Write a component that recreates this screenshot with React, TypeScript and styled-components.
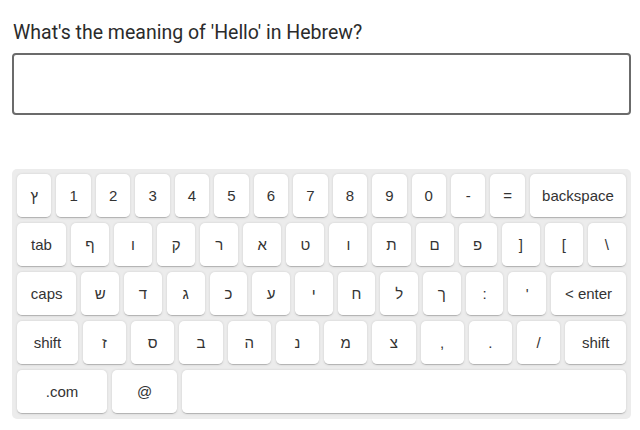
import React from "react";
import styled, { createGlobalStyle } from "styled-components";

const Global = createGlobalStyle`
  html, body { margin: 0; padding: 0; background: #ffffff; }
  body { font-family: Roboto, "Liberation Sans", Arial, sans-serif; }
`;

const Page = styled.div`
  width: 619px;
  padding: 21px 0 0 12px;
`;

const Question = styled.label`
  display: block;
  font-family: Roboto, "Liberation Sans", sans-serif;
  font-size: 19.5px;
  line-height: 24px;
  color: #2b2b2b;
  margin: 0 0 8px 1px;
`;

const Answer = styled.input`
  display: block;
  box-sizing: border-box;
  width: 100%;
  height: 62px;
  border: 2px solid #6b6b6b;
  border-radius: 4px;
  background: #fff;
  outline: none;
  padding: 0 10px;
  font-size: 18px;
`;

const Keyboard = styled.div`
  box-sizing: border-box;
  margin-top: 54px;
  width: 100%;
  padding: 5px;
  background: #ececec;
  border-radius: 5px;
  display: flex;
  flex-direction: column;
  gap: 5px;
  font-family: "Liberation Sans", Arial, "DejaVu Sans", sans-serif;
`;

const Row = styled.div`
  display: flex;
  gap: 5px;
`;

const Key = styled.div<{ $std?: boolean; $w?: number; $fill?: boolean }>`
  box-sizing: border-box;
  height: 44px;
  padding: 5px;
  display: flex;
  align-items: center;
  justify-content: center;
  background: #ffffff;
  border-radius: 5px;
  border-bottom: 1px solid #b5b5b5;
  box-shadow: 0 0 3px -1px rgba(0, 0, 0, 0.3);
  font-size: 15px;
  color: #333333;
  white-space: nowrap;
  flex-grow: ${(p) => (p.$w ? 0 : 1)};
  flex-shrink: ${(p) => (p.$w ? 0 : 1)};
  width: ${(p) => (p.$w ? `${p.$w}px` : p.$std ? "20px" : "auto")};
  ${(p) => (p.$fill ? "flex: 1 1 0;" : "")}
`;

const rows: string[][] = [
  ["ץ", "1", "2", "3", "4", "5", "6", "7", "8", "9", "0", "-", "=", "{backspace}"],
  ["{tab}", "ף", "ו", "ק", "ר", "א", "ט", "ו", "ת", "ם", "פ", "]", "[", "\\"],
  ["{caps}", "ש", "ד", "ג", "כ", "ע", "י", "ח", "ל", "ך", ":", "'", "{< enter}"],
  ["{shift}", "ז", "ס", "ב", "ה", "נ", "מ", "צ", ",", ".", "/", "{shift}"],
];

export default function App() {
  return (
    <Page>
      <Global />
      <Question htmlFor="answer">What's the meaning of 'Hello' in Hebrew?</Question>
      <Answer id="answer" type="text" />
      <Keyboard>
        {rows.map((row, i) => (
          <Row key={i}>
            {row.map((k, j) => {
              const fn = k.length > 2 && k.startsWith("{") && k.endsWith("}");
              const label = fn ? k.slice(1, -1) : k;
              return (
                <Key key={j} $std={!fn}>
                  {label}
                </Key>
              );
            })}
          </Row>
        ))}
        <Row>
          <Key $w={90}>.com</Key>
          <Key $w={65}>@</Key>
          <Key $fill> </Key>
        </Row>
      </Keyboard>
    </Page>
  );
}
